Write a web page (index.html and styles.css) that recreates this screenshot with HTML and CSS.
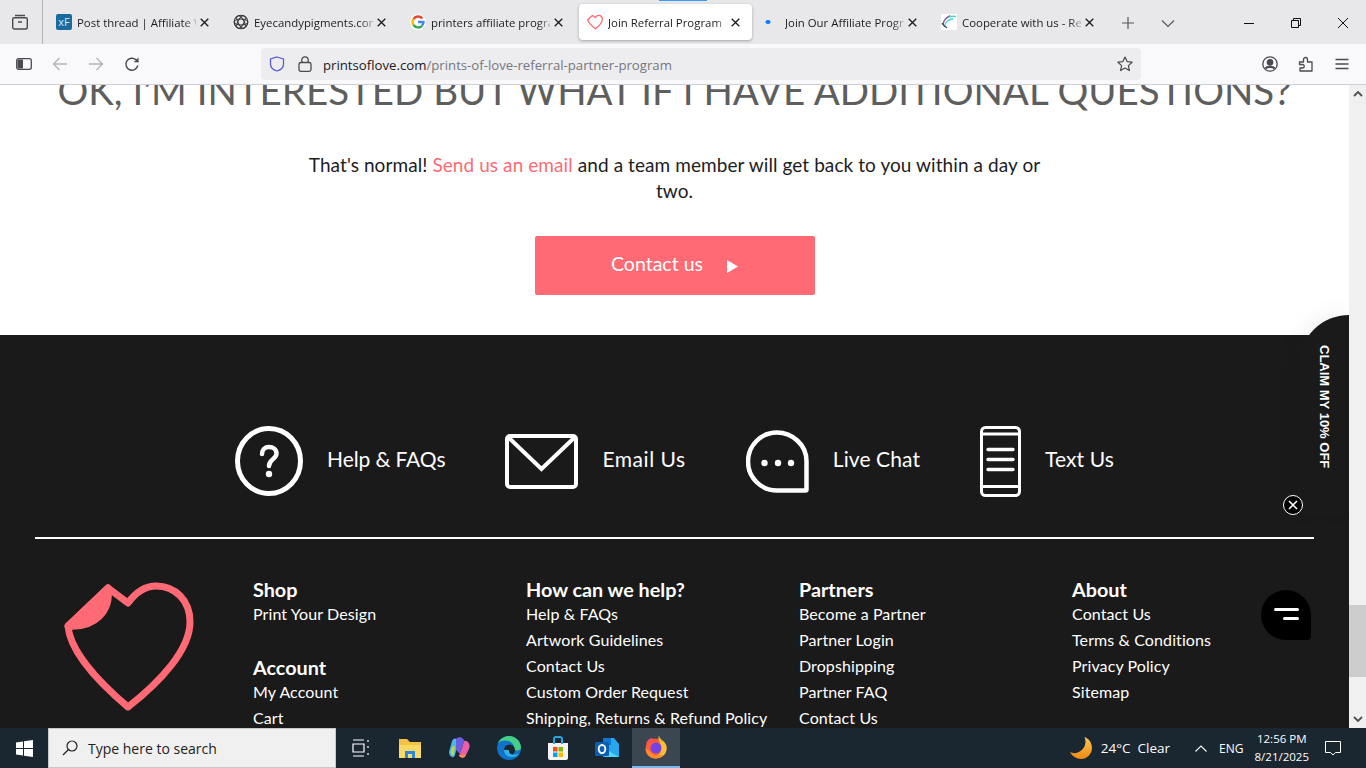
FILE: index.html
```html
<!DOCTYPE html>
<html lang="en">
<head>
<meta charset="utf-8">
<title>Join Referral Program | Prints of Love</title>
<link rel="stylesheet" href="styles.css">
</head>
<body>
<div class="app">
  <header class="tabbar">
    <div class="tab-manager">
      <svg class="ic20" viewBox="0 0 20 20" fill="none" stroke="#4a4a50" stroke-width="1.4"><path d="M5 3.5h10M2.7 7.2a1.5 1.5 0 0 1 1.5-1.5h11.6a1.5 1.5 0 0 1 1.5 1.5v8a1.8 1.8 0 0 1-1.8 1.8H4.500a1.800 1.800 0 0 1-1.800-1.800zM8 10h4"/></svg>
    </div>
    <div class="tabs">
      <div class="tab"><span class="fav fav-xf">xF</span><span class="tab-title">Post thread | Affiliate W</span><svg class="tab-close" viewBox="0 0 10 10" fill="none" stroke="#1c1b22" stroke-width="1.500"><path d="M.8.800l8.400 8.400M9.200.800.800 9.200"/></svg></div>
      <div class="tab"><svg class="fav" viewBox="0 0 16 16" fill="none" stroke="#333" stroke-width="1.100"><circle cx="8" cy="8" r="6.800"/><ellipse cx="8" cy="8" rx="6.800" ry="3"/><ellipse cx="8" cy="8" rx="6.800" ry="3" transform="rotate(60 8 8)"/><ellipse cx="8" cy="8" rx="6.800" ry="3" transform="rotate(120 8 8)"/></svg><span class="tab-title">Eyecandypigments.con</span><svg class="tab-close" viewBox="0 0 10 10" fill="none" stroke="#1c1b22" stroke-width="1.500"><path d="M.8.800l8.400 8.400M9.200.800.800 9.200"/></svg></div>
      <div class="tab"><svg class="fav" viewBox="0 0 16 16" fill="none" stroke-width="2.400"><circle cx="8" cy="8" r="8" fill="#fff" stroke="none"/><path d="M12.300 4.500A5.500 5.500 0 0 0 3.500 5" stroke="#ea4335"/><path d="M3.500 5a5.500 5.500 0 0 0 0 6" stroke="#fbbc05"/><path d="M3.500 11a5.500 5.500 0 0 0 8.500.8" stroke="#34a853"/><path d="M12 11.800A5.500 5.500 0 0 0 13.500 8H8" stroke="#4285f4"/></svg><span class="tab-title">printers affiliate progra</span><svg class="tab-close" viewBox="0 0 10 10" fill="none" stroke="#1c1b22" stroke-width="1.500"><path d="M.8.800l8.400 8.400M9.200.800.800 9.200"/></svg></div>
      <div class="tab tab-active"><svg class="fav" viewBox="0 0 16 16" fill="none" stroke="#ff6a74" stroke-width="1.300" stroke-linejoin="round"><path d="M5.500 1.500 8.300 3.500C9.500 1.800 11 1.200 12.300 1.400 14.300 1.800 15.500 3.500 15.300 5.700 15 8.800 11.700 12.200 8.500 14.800 5 12 1.300 8.800.7 5.800Z"/></svg><span class="tab-title">Join Referral Program |</span><svg class="tab-close" viewBox="0 0 10 10" fill="none" stroke="#1c1b22" stroke-width="1.500"><path d="M.8.800l8.400 8.400M9.200.800.800 9.200"/></svg></div>
      <div class="tab"><svg class="fav" viewBox="0 0 16 16"><ellipse cx="4" cy="8" rx="2.600" ry="2" fill="#0a7cff"/></svg><span class="tab-title">Join Our Affiliate Progr</span><svg class="tab-close" viewBox="0 0 10 10" fill="none" stroke="#1c1b22" stroke-width="1.500"><path d="M.8.800l8.400 8.400M9.200.800.800 9.200"/></svg></div>
      <div class="tab"><svg class="fav fav-co" viewBox="0 0 16 16" fill="none" stroke-width="1.300"><path d="M15 2.500C9 1.500 4 4 2.500 8" stroke="#45d6dc"/><path d="M9 1.500C5 3.500 2.500 7 2 11" stroke="#b04aa0"/><path d="M12 5C8 5 4 8 3.500 13" stroke="#45d6dc"/><path d="M1 9c1 2 3 4 5 5" stroke="#345"/></svg><span class="tab-title">Cooperate with us - Re</span><svg class="tab-close" viewBox="0 0 10 10" fill="none" stroke="#1c1b22" stroke-width="1.500"><path d="M.8.800l8.400 8.400M9.200.800.800 9.200"/></svg></div>
    </div>
    <div class="tab-actions">
      <svg class="ic14" viewBox="0 0 14 14" fill="none" stroke="#55555b" stroke-width="1.200"><path d="M7 1v12M1 7h12"/></svg>
      <svg class="ic14" viewBox="0 0 14 14" fill="none" stroke="#55555b" stroke-width="1.200"><path d="M1 4.500l6 6 6-6"/></svg>
    </div>
    <div class="win-controls">
      <svg class="ic12" viewBox="0 0 12 12" fill="none" stroke="#111" stroke-width="1"><path d="M1 6.500h10"/></svg>
      <svg class="ic12" viewBox="0 0 12 12" fill="none" stroke="#111" stroke-width="1"><path d="M1.500 3.500h7v7h-7zM3.500 3.500v-2h7v7h-2"/></svg>
      <svg class="ic12" viewBox="0 0 12 12" fill="none" stroke="#111" stroke-width="1"><path d="M1 1l10 10M11 1L1 11"/></svg>
    </div>
    <i class="tab-progress"></i>
  </header>

  <nav class="navbar">
    <div class="nav-left">
      <svg class="ic16" viewBox="0 0 16 16" fill="none" stroke="#4a4a50" stroke-width="1.300"><rect x=".7" y="2.700" width="14.600" height="10.600" rx="2"/><rect x="1.500" y="3.500" width="5.500" height="9" fill="#4a4a50" stroke="none"/></svg>
      <svg class="ic16" viewBox="0 0 16 16" fill="none" stroke="#b4b4b8" stroke-width="1.300"><path d="M15 8H1.500M7.500 2 1.500 8l6 6"/></svg>
      <svg class="ic16" viewBox="0 0 16 16" fill="none" stroke="#b4b4b8" stroke-width="1.300"><path d="M1 8h13.500M8.500 2l6 6-6 6"/></svg>
      <svg class="ic16" viewBox="0 0 16 16" fill="none" stroke="#4a4a50" stroke-width="1.400"><path d="M13.800 9.500A6 6 0 1 1 12 3.800L14.300 6"/><path d="M14.500 1.500V6.300H9.800" fill="#4a4a50" stroke="none"/></svg>
    </div>
    <div class="urlbar">
      <svg class="ic16 shield" viewBox="0 0 16 16" fill="none" stroke="#5b5bd6" stroke-width="1.300"><path d="M8 1 14.500 3V8C14.500 11.500 11.500 14 8 15 4.500 14 1.500 11.500 1.500 8V3Z"/></svg>
      <svg class="ic16 lock" viewBox="0 0 16 16" fill="none" stroke="#4a4a50" stroke-width="1.300"><rect x="2" y="6.500" width="12" height="8.800" rx="1.800"/><path d="M4.800 6.500V4a3.200 3.200 0 0 1 6.400 0V6.500"/></svg>
      <span class="url"><b class="url-host">printsoflove.com</b>/prints-of-love-referral-partner-program</span>
      <svg class="ic16 star" viewBox="0 0 16 16" fill="none" stroke="#4a4a50" stroke-width="1.200" stroke-linejoin="round"><path d="M8 1l2.100 4.600 5 .6-3.700 3.400 1 5L8 12.100l-4.400 2.500 1-5L.9 6.200l5-.6Z"/></svg>
    </div>
    <div class="nav-right">
      <svg class="ic16" viewBox="0 0 16 16" fill="none" stroke="#4a4a50" stroke-width="1.300"><circle cx="8" cy="8" r="7.200"/><circle cx="8" cy="6.300" r="2.700" fill="#4a4a50"/><path d="M3.300 12.500C5 10.300 11 10.300 12.700 12.500" stroke-width="2.200"/></svg>
      <svg class="ic16" viewBox="0 0 16 16" fill="none" stroke="#4a4a50" stroke-width="1.300" stroke-linejoin="round"><path d="M1.500 6H5.500V3.500a2 2 0 0 1 4 0V6H14V15H2V12H4.500a1.500 1.500 0 0 0 0-3.500H1.500Z"/></svg>
      <svg class="ic16" viewBox="0 0 16 16" fill="none" stroke="#4a4a50" stroke-width="1.300"><path d="M1.500 3.500h13M1.500 8h13M1.500 12.500h13"/></svg>
    </div>
  </nav>

  <div class="viewport">
    <main class="page">
      <section class="cta">
        <h2 class="cta-title">OK, I'M INTERESTED BUT WHAT IF I HAVE ADDITIONAL QUESTIONS?</h2>
        <p class="cta-text">That's normal! <a class="cta-link">Send us an email</a> and a team member will get back to you within a day or two.</p>
        <a class="cta-btn">Contact us <svg class="cta-arrow" viewBox="0 0 11 13"><path d="M0 0l11 6.500L0 13z" fill="#fff"/></svg></a>
      </section>

      <footer class="footer">
        <div class="help-row">
          <div class="help-item">
            <svg class="icon-help" viewBox="0 0 68 70" fill="none" stroke="#fff"><ellipse cx="34" cy="35" rx="31.500" ry="32.500" stroke-width="5"/><path d="M27 28c0-4.500 3-7 7-7s7.500 2.500 7.500 6.500c0 5.500-7.500 6-7.500 12.500" stroke-width="4.500" stroke-linecap="round"/><circle cx="34" cy="48" r="3.200" fill="#fff" stroke="none"/></svg>
            <span class="help-label label-help">Help &amp; FAQs</span>
          </div>
          <div class="help-item">
            <svg class="icon-mail" viewBox="0 0 73 55" fill="none" stroke="#fff" stroke-width="4"><rect x="2" y="2" width="69" height="51" rx="3"/><path d="M3 3l33.500 32L70 3"/></svg>
            <span class="help-label label-email">Email Us</span>
          </div>
          <div class="help-item">
            <svg class="icon-chat" viewBox="0 0 63 63" fill="none" stroke="#fff" stroke-width="4.500"><path d="M31 2.500C46.500 2.500 60.500 15 60.500 31V59.500a1 1 0 0 1-1 1H31A29 29 0 0 1 31 2.500Z"/><g fill="#fff" stroke="none"><circle cx="18.500" cy="33" r="3.200"/><circle cx="32" cy="33" r="3.200"/><circle cx="45" cy="33" r="3.200"/></g></svg>
            <span class="help-label">Live Chat</span>
          </div>
          <div class="help-item">
            <svg class="icon-phone" viewBox="0 0 41 71" fill="none" stroke="#fff" stroke-width="3"><rect x="1.500" y="1.500" width="38" height="68" rx="4"/><path d="M2 8h37M2 60.500h37"/><path d="M8 23.500h25M8 33.500h25M8 43.500h25" stroke-width="3.400" stroke-linecap="round"/></svg>
            <span class="help-label">Text Us</span>
          </div>
        </div>
        <hr class="footer-rule">
        <div class="footer-cols">
          <svg class="logo" viewBox="0 0 130 130" fill="none" stroke="#ff6a74" stroke-width="7" stroke-linejoin="round"><path d="M44 6 64 21C72 10 81 4 92 4 111 4 126 18 126 40 126 68 96 100 64 125 32 98 6 68 4 44Z"/><path d="M44 6C47 28 32 46 4 44Z" fill="#ff6a74"/></svg>
          <div class="col">
            <h4>Shop</h4>
            <a>Print Your Design</a>
            <h4 class="col-gap">Account</h4>
            <a>My Account</a>
            <a>Cart</a>
          </div>
          <div class="col">
            <h4>How can we help?</h4>
            <a>Help &amp; FAQs</a>
            <a>Artwork Guidelines</a>
            <a>Contact Us</a>
            <a>Custom Order Request</a>
            <a>Shipping, Returns &amp; Refund Policy</a>
          </div>
          <div class="col">
            <h4>Partners</h4>
            <a>Become a Partner</a>
            <a>Partner Login</a>
            <a>Dropshipping</a>
            <a>Partner FAQ</a>
            <a>Contact Us</a>
          </div>
          <div class="col">
            <h4>About</h4>
            <a>Contact Us</a>
            <a>Terms &amp; Conditions</a>
            <a>Privacy Policy</a>
            <a>Sitemap</a>
          </div>
        </div>
      </footer>

      <div class="claim"><span>CLAIM MY 10% OFF</span></div>
      <div class="claim-close"><svg viewBox="0 0 10 10" fill="none" stroke="#fff" stroke-width="1.600"><path d="M1 1l8 8M9 1L1 9"/></svg></div>
      <div class="chat-fab"><i class="fab-l1"></i><i class="fab-l2"></i></div>
    </main>
    <aside class="scrollbar">
      <svg class="sb-arrow" viewBox="0 0 10 6" fill="none" stroke="#505050" stroke-width="1.800"><path d="M1 5l4-4 4 4"/></svg>
      <div class="sb-track"><div class="sb-thumb"></div></div>
      <svg class="sb-arrow" viewBox="0 0 10 6" fill="none" stroke="#505050" stroke-width="1.800"><path d="M1 1l4 4 4-4"/></svg>
    </aside>
  </div>

  <div class="taskbar">
    <div class="start"><svg class="ic16w" viewBox="0 0 17 17" fill="#fff"><path d="M0 2.400 7 1.400V8H0ZM8 1.300 17 0V8H8ZM0 9H7V15.600L0 14.600ZM8 9H17V17L8 15.700Z"/></svg></div>
    <div class="search">
      <svg class="search-ic" viewBox="0 0 16 16" fill="none" stroke="#222" stroke-width="1.200"><circle cx="10" cy="6" r="5"/><path d="M6.500 9.500 1 15"/></svg>
      <span>Type here to search</span>
    </div>
    <div class="task-icons">
      <div class="task"><svg class="t-ic" viewBox="0 0 18 18" fill="none" stroke="#fff" stroke-width="1.200"><path d="M1 1h11M1 17h11M1 5h11v8H1zM16 1v2M16 7v2M16 14v2"/></svg></div>
      <div class="task"><svg class="t-ic-l" viewBox="0 0 24 22"><path d="M1 2h8l3 3h11v15H1z" fill="#f5c344"/><path d="M1 8h22v13H1z" fill="#fcd866"/><path d="M7 21v-7h10v7h-3v-4h-4v4z" fill="#2b88d8"/></svg></div>
      <div class="task"><svg class="t-ic-l" viewBox="0 0 24 24"><path d="M5 5C7 1 11 2 11 6L8 19C7 23 2 21 2 16Z" fill="#4fb7e8"/><path d="M9 3C11 0 17 1 17 5L13 18 9 14Z" fill="#6d5de0"/><path d="M17 5C21 4 24 9 22 13L19 19C17 23 14 22 12 20L15 12Z" fill="#e85fa5"/><path d="M5 11 8 10 7 19C5 20 3 18 4 15Z" fill="#b7d84a"/><path d="M12 19H19C18 22 14 23 12 19Z" fill="#f5914b"/></svg></div>
      <div class="task"><svg class="t-ic-l" viewBox="0 0 24 24"><circle cx="12" cy="12" r="12" fill="#0f74c9"/><path d="M24 12C24 6 19 0 12 0 7 0 3 3 1 7 4 4 9 4 12 5 17 7 18 12 15 13 18 15 24 15 24 12Z" fill="#45cf84"/><circle cx="12.500" cy="14" r="5.500" fill="#1a2630"/><path d="M7 14C7 19 11 21 15 21 18 21 20 20 22 18 16 20 11 18 12 14Z" fill="#2eb3e8"/></svg></div>
      <div class="task"><svg class="t-ic-l" viewBox="0 0 24 24"><path d="M2 7H22V22a2 2 0 0 1-2 2H4a2 2 0 0 1-2-2Z" fill="#f5f5f5"/><path d="M8 8V3a2 2 0 0 1 2-2h4a2 2 0 0 1 2 2V8" fill="none" stroke="#27a6dc" stroke-width="2"/><rect x="7" y="11" width="4.500" height="4.500" fill="#f25022"/><rect x="12.500" y="11" width="4.500" height="4.500" fill="#7fba00"/><rect x="7" y="16.500" width="4.500" height="4.500" fill="#00a4ef"/><rect x="12.500" y="16.500" width="4.500" height="4.500" fill="#ffb900"/></svg></div>
      <div class="task"><svg class="t-ic-l" viewBox="0 0 24 24"><path d="M8 2H19L24 8V21H8Z" fill="#28a8ea"/><path d="M8 2h8v7H8z" fill="#0f78d4"/><path d="M10 13 24 21H10Z" fill="#50d9ff"/><rect x="0" y="6" width="14" height="14" rx="1.500" fill="#0a5fb0"/><ellipse cx="7" cy="13" rx="3.300" ry="4" fill="none" stroke="#fff" stroke-width="1.800"/></svg></div>
      <div class="task task-active"><svg class="t-ic-l" viewBox="0 0 24 24"><circle cx="11.500" cy="13.500" r="10" fill="#ff5a3c"/><path d="M15 0C15 4 19 5 21 8 24 12 23 18 19 21 15 24 9 24 5 21 10 23 16 21 17 15 18 9 13 6 15 0Z" fill="#ffbd38"/><path d="M1.500 14C1.500 19 6 23.500 11.500 23.500 15 23.500 18 22 20 19.500 16 21.500 8 21 5 15Z" fill="#ff8a2b"/><circle cx="12" cy="13" r="5.500" fill="#7542e5"/><path d="M2 9C3 5 6 3 9 3 7 5 7 6 8 7 5 7 3 8 2 9Z" fill="#ff4f5e"/></svg></div>
    </div>
    <div class="tray">
      <svg class="moon" viewBox="0 0 22 22"><defs><linearGradient id="moonfill" x1="0" y1="0" x2="0" y2="1"><stop offset="0" stop-color="#f9c557"/><stop offset="1" stop-color="#f08a12"/></linearGradient></defs><path d="M14.500 0C19 1.500 22 6 22 11 22 17 17 22 11 22 6.500 22 2 19 0 15 1.500 16 4 16.500 6 16 11 15 15.500 10 15.500 5 15.500 3 15 1.500 14.500 0Z" fill="url(#moonfill)"/></svg>
      <span class="weather">24°C&nbsp;&nbsp;Clear</span>
      <svg class="tray-chev" viewBox="0 0 12 7" fill="none" stroke="#fff" stroke-width="1.100"><path d="M.5 6.500 6 1l5.500 5.500"/></svg>
      <span class="lang">ENG</span>
      <div class="clock"><span>12:56 PM</span><span>8/21/2025</span></div>
      <svg class="notif" viewBox="0 0 16 15" fill="none" stroke="#fff" stroke-width="1"><path d="M.5.500h15v11h-5L8 14l-2.500-2.500h-5Z"/></svg>
    </div>
  </div>
</div>
</body>
</html>
```
FILE: styles.css
```css
* { box-sizing: border-box; }
html, body { margin: 0; height: 100%; overflow: hidden; }
body { font-family: "Lato", "Liberation Sans", sans-serif; }
svg { display: block; flex: none; }
.app { width: 1366px; height: 768px; display: flex; flex-direction: column; overflow: hidden; }

/* Browser tab strip */
.tabbar { position: relative; height: 44px; background: #e8e8eb; display: flex; flex: none; font-family: "Open Sans", sans-serif; }
.tab-manager { width: 43px; height: 44px; border-right: 1px solid #b5b5b9; display: flex; align-items: center; justify-content: center; padding-right: 2px; }
.ic20 { width: 20px; height: 20px; }
.ic16 { width: 16px; height: 16px; }
.ic14 { width: 14px; height: 14px; }
.ic12 { width: 12px; height: 12px; }
.tabs { display: flex; gap: 4px; padding: 4px 0 0 5px; }
.tab { width: 173px; height: 36px; display: flex; align-items: center; padding-left: 8px; border-radius: 4px; position: relative; }
.tab-active { background: #fff; box-shadow: 0 1px 3px rgba(0,0,0,.3); }
.fav { width: 16px; height: 16px; }
.fav-xf { background: #1a6a9e; color: #d6e8f5; font: 11px/16px "Open Sans", sans-serif; text-align: center; border-radius: 2px; }
.fav-co { background: #fff; }
.tab-title { margin-left: 5px; width: 119px; white-space: nowrap; font-size: 11.400px; color: #1c1b22; -webkit-mask-image: linear-gradient(90deg, #000 90%, rgba(0,0,0,.25)); mask-image: linear-gradient(90deg, #000 90%, rgba(0,0,0,.25)); }
.tab-close { position: absolute; left: 152px; top: 14px; width: 9px; height: 9px; }
.tab-actions { display: flex; align-items: center; gap: 26px; padding-left: 15px; padding-top: 1px; }
.win-controls { margin-left: auto; display: flex; align-items: center; gap: 35px; padding-right: 17px; padding-top: 1px; }
.tab-progress { position: absolute; left: 659px; top: 0; width: 48px; height: 1px; background: #3b9bf2; }

/* Browser toolbar */
.navbar { height: 41px; background: #f9f9fb; border-bottom: 1px solid #cfcfd8; display: flex; align-items: center; flex: none; font-family: "Open Sans", sans-serif; }
.nav-left { width: 261px; display: flex; gap: 20px; padding-left: 16px; }
.urlbar { width: 880px; height: 32px; background: #ededf0; border-radius: 4px; display: flex; align-items: center; padding-left: 8px; }
.shield { margin-right: 12px; }
.lock { margin-right: 10px; }
.url { font-size: 13.200px; color: #77777d; white-space: nowrap; padding-top: 1px; }
.url-host { font-weight: 400; color: #1c1b22; }
.star { margin-left: auto; margin-right: 8px; }
.nav-right { flex: 1; display: flex; gap: 20px; justify-content: flex-end; padding-right: 16px; }

/* Scrolled page */
.viewport { flex: 1; display: flex; min-height: 0; }
.page { width: 1349px; position: relative; overflow: hidden; }
.cta { height: 250px; background: #fff; display: flex; flex-direction: column; align-items: center; }
.cta-title { margin: -18px 0 0; font-size: 38.500px; line-height: 46px; font-weight: 400; color: #5e5e5e; white-space: nowrap; }
.cta-text { margin: 39px 0 0; width: 745px; text-align: center; font-size: 19px; letter-spacing: .08px; line-height: 26px; color: #1d1d1f; }
.cta-link { color: #ff6a74; }
.cta-btn { margin-top: 32px; width: 280px; height: 59px; background: #ff6a74; border-radius: 2px; color: #fff; font-size: 19.500px; display: flex; align-items: center; justify-content: center; gap: 24px; padding-bottom: 4px; }
.cta-arrow { width: 11px; height: 13px; margin-top: 5px; }

/* Footer */
.footer { height: 393px; background: #1a1a1a; color: #fff; padding: 90px 35px 0; }
.help-row { display: flex; justify-content: center; gap: 60px; height: 72px; align-items: center; }
.help-item { display: flex; align-items: center; gap: 24px; font-size: 21px; letter-spacing: .1px; }
.help-label { padding-bottom: 6px; }
.label-help { letter-spacing: -.1px; }
.label-email { letter-spacing: .55px; }
.icon-help { width: 68px; height: 70px; }
.icon-mail { width: 73px; height: 55px; }
.icon-chat { width: 63px; height: 63px; }
.icon-phone { width: 41px; height: 71px; }
.footer-rule { margin: 40px 0 0; height: 2px; border: 0; background: #fff; width: 1279px; }
.footer-cols { display: flex; padding-top: 38px; position: relative; }
.logo { width: 130px; height: 130px; margin: 5px 0 0 29px; }
.col { flex: none; width: 273px; font-size: 16px; letter-spacing: .1px; display: flex; flex-direction: column; align-items: flex-start; }
.logo + .col { margin-left: 59px; }
.col h4 { margin: 0; font-size: 19.800px; letter-spacing: 0; line-height: 24px; font-weight: 700; }
.col a { line-height: 26px; white-space: nowrap; }
.col .col-gap { margin-top: 28px; }

/* Floating widgets */
.claim { position: absolute; left: 1299px; top: 230px; width: 50px; height: 200px; background: #1a1a1a; border-top-left-radius: 50px; box-shadow: -4px -4px 20px rgba(0,0,0,.06); }
.claim span { position: absolute; top: 30px; left: 18px; writing-mode: vertical-rl; font: 700 13px/15px "Liberation Sans", sans-serif; color: #fff; white-space: nowrap; }
.claim-close { position: absolute; left: 1283px; top: 410px; width: 20px; height: 20px; border-radius: 50%; background: #000; border: 1px solid #fff; display: flex; align-items: center; justify-content: center; }
.claim-close svg { width: 10px; height: 10px; }
.chat-fab { position: absolute; left: 1261px; top: 505px; width: 50px; height: 50px; background: #000; border-radius: 50% 50% 4px 50%; }
.fab-l1, .fab-l2 { position: absolute; height: 3px; background: #fff; border-radius: 2px; }
.fab-l1 { left: 13px; top: 18px; width: 25px; }
.fab-l2 { left: 22px; top: 27px; width: 16px; }

/* Scrollbar */
.scrollbar { width: 17px; background: #f0f0f0; display: flex; flex-direction: column; align-items: center; }
.sb-arrow { width: 10px; height: 6px; margin: 6px 0; }
.sb-track { flex: 1; width: 17px; padding-top: 502px; }
.sb-thumb { height: 72px; background: #cdcdcd; }

/* Windows taskbar */
.taskbar { height: 40px; background: #1a2630; display: flex; align-items: center; flex: none; font-family: "Open Sans", sans-serif; color: #fff; }
.start { width: 48px; display: flex; justify-content: center; }
.ic16w { width: 17px; height: 17px; }
.search { width: 288px; height: 40px; background: #f0f0f0; border: 1px solid #c8c8c8; display: flex; align-items: center; padding-left: 13px; color: #222; font-size: 14px; }
.search-ic { width: 16px; height: 16px; margin-right: 10px; }
.task-icons { display: flex; }
.task { width: 49.330px; height: 40px; display: flex; align-items: center; justify-content: center; }
.task-active { background: #3b4650; border-bottom: 2px solid #76b9ed; width: 48px; }
.t-ic { width: 18px; height: 18px; }
.t-ic-l { width: 24px; height: 24px; }
.tray { margin-left: auto; display: flex; align-items: center; padding-right: 25px; }
.moon { width: 22px; height: 22px; margin-right: 9px; }
.weather { font-size: 13.500px; margin-right: 25px; white-space: nowrap; }
.tray-chev { width: 12px; height: 7px; margin-right: 12px; }
.lang { font-size: 12px; margin-right: 11px; }
.clock { display: flex; flex-direction: column; align-items: center; font-size: 11.500px; line-height: 18px; margin-right: 16px; }
.notif { width: 16px; height: 15px; }
```
